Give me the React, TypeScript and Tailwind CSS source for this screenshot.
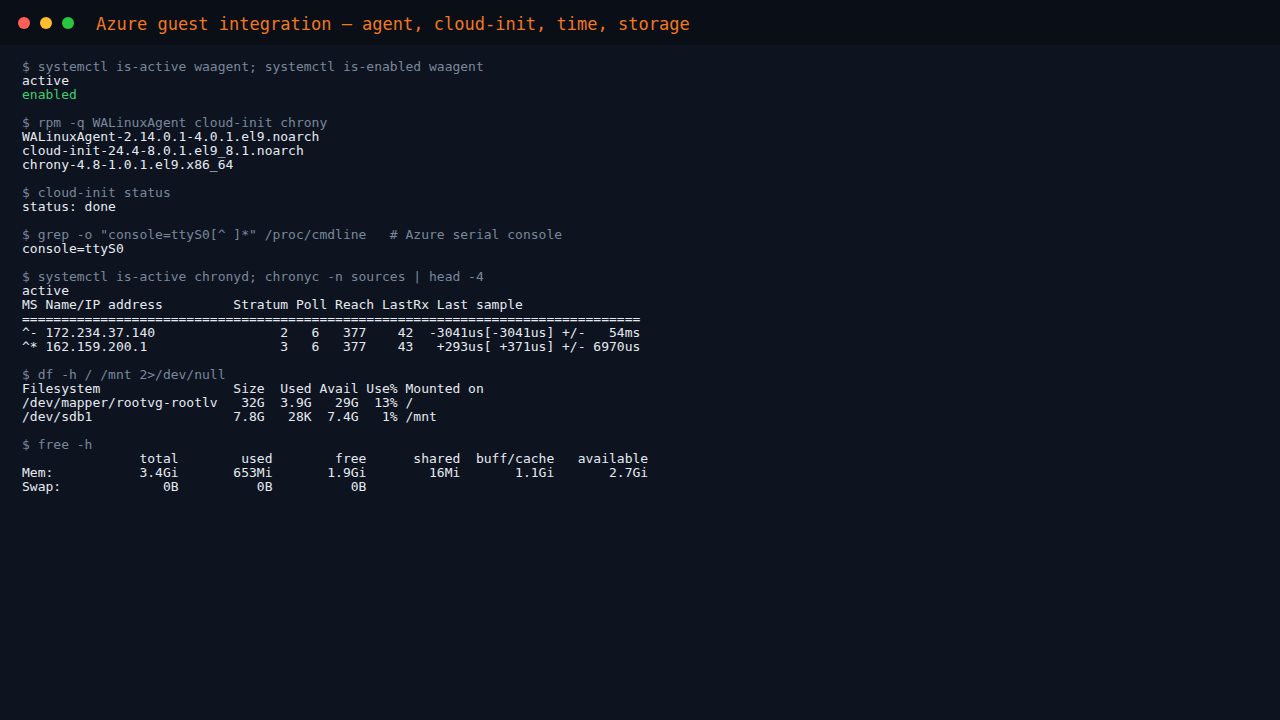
import React from "react";

type Line = { t: string; k?: "cmd" | "ok" | "out" };

const blocks: Line[][] = [
  [
    { t: "$ systemctl is-active waagent; systemctl is-enabled waagent", k: "cmd" },
    { t: "active" },
    { t: "enabled", k: "ok" },
  ],
  [
    { t: "$ rpm -q WALinuxAgent cloud-init chrony", k: "cmd" },
    { t: "WALinuxAgent-2.14.0.1-4.0.1.el9.noarch" },
    { t: "cloud-init-24.4-8.0.1.el9_8.1.noarch" },
    { t: "chrony-4.8-1.0.1.el9.x86_64" },
  ],
  [
    { t: "$ cloud-init status", k: "cmd" },
    { t: "status: done" },
  ],
  [
    { t: '$ grep -o "console=ttyS0[^ ]*" /proc/cmdline   # Azure serial console', k: "cmd" },
    { t: "console=ttyS0" },
  ],
  [
    { t: "$ systemctl is-active chronyd; chronyc -n sources | head -4", k: "cmd" },
    { t: "active" },
    { t: "MS Name/IP address         Stratum Poll Reach LastRx Last sample" },
    { t: "===============================================================================" },
    { t: "^- 172.234.37.140                2   6   377    42  -3041us[-3041us] +/-   54ms" },
    { t: "^* 162.159.200.1                 3   6   377    43   +293us[ +371us] +/- 6970us" },
  ],
  [
    { t: "$ df -h / /mnt 2>/dev/null", k: "cmd" },
    { t: "Filesystem                 Size  Used Avail Use% Mounted on" },
    { t: "/dev/mapper/rootvg-rootlv   32G  3.9G   29G  13% /" },
    { t: "/dev/sdb1                  7.8G   28K  7.4G   1% /mnt" },
  ],
  [
    { t: "$ free -h", k: "cmd" },
    { t: "               total        used        free      shared  buff/cache   available" },
    { t: "Mem:           3.4Gi       653Mi       1.9Gi        16Mi       1.1Gi       2.7Gi" },
    { t: "Swap:             0B          0B          0B" },
  ],
];

const color = {
  cmd: "text-[#7a879b]",
  ok: "text-[#3fcf6b]",
  out: "text-[#e6eaf0]",
};

export default function App() {
  return (
    <div className="w-[1280px] h-[720px] bg-[#0d1420] font-['DejaVu_Sans_Mono',monospace] overflow-hidden">
      <header className="h-[45px] bg-[#0a0e17] flex items-center pl-[18px]">
        <div className="flex items-center gap-[10px]">
          <span className="w-[12px] h-[12px] rounded-full bg-[#ff5f57]" />
          <span className="w-[12px] h-[12px] rounded-full bg-[#febc2e]" />
          <span className="w-[12px] h-[12px] rounded-full bg-[#28c840]" />
        </div>
        <h1 className="ml-[22px] pt-[4px] text-[17px] leading-none text-[#f07820]">
          Azure guest integration — agent, cloud-init, time, storage
        </h1>
      </header>

      <main className="px-[22px] pt-[15px] flex flex-col gap-[14px] text-[13px] leading-[14px] whitespace-pre">
        {blocks.map((b, i) => (
          <div key={i}>
            {b.map((l, j) => (
              <div key={j} className={color[l.k ?? "out"]}>
                {l.t}
              </div>
            ))}
          </div>
        ))}
      </main>
    </div>
  );
}
